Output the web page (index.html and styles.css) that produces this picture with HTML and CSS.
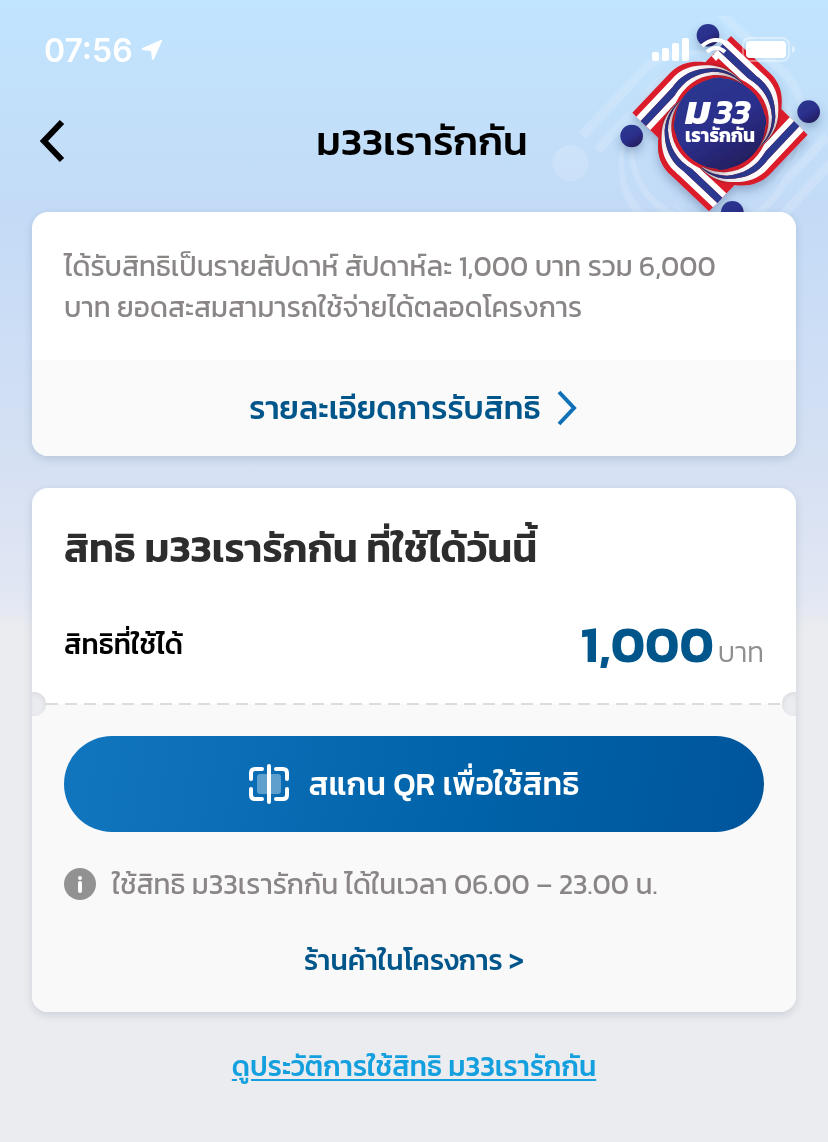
FILE: index.html
```html
<!DOCTYPE html>
<html lang="th">
<head>
  <meta charset="UTF-8" />
  <meta name="viewport" content="width=device-width, initial-scale=1.0"/>
  <title>ม33เรารักกัน</title>
  <link rel="stylesheet" href="styles.css">
</head>
<body>
  <svg class="emblem" viewBox="0 0 864 690" aria-hidden="true">
    <defs>
      <linearGradient id="navy" x1="0" y1="0" x2="0.6" y2="1">
        <stop offset="0" stop-color="#2b3990"/>
        <stop offset="0.6" stop-color="#2c2f8c"/>
        <stop offset="1" stop-color="#241f62"/>
      </linearGradient>
      <linearGradient id="fold" gradientUnits="userSpaceOnUse" x1="-130" y1="-120" x2="75" y2="-130">
        <stop offset="0" stop-color="#1a0d20" stop-opacity="0"/>
        <stop offset="0.5" stop-color="#1a0d20" stop-opacity="0.08"/>
        <stop offset="1" stop-color="#1a0d20" stop-opacity="0.45"/>
      </linearGradient>
      <filter id="soft" x="-20%" y="-20%" width="140%" height="140%">
        <feDropShadow dx="0" dy="16" stdDeviation="14" flood-color="#33507c" flood-opacity="0.35"/>
      </filter>
      <g id="whites">
        <path fill="#fff" d="M-251-21L-146-132C-110-174-66-178-20-174C20-169 50-147 75-113C50-144 20-163-20-166C-67-166-109-155-142-110L-238-8Z"/>
        <path fill="#fff" d="M-222 7L-137-83C-109-131-68-153-20-156C20-156 50-140 75-113C50-134 20-148-20-146C-68-142-109-112-133-62L-209 19Z"/>
      </g>
      <g id="ribbon">
        <path fill="#dc1f2b" d="M-263-33L-150-152C-110-192-65-188-20-181C20-174 50-150 75-113C50-130 20-144-20-137C-70-120-108-75-125-20L-184 44Z"/>
        <use href="#whites"/>
        <path fill="#2b3990" d="M-238-8L-142-110C-109-155-67-166-20-166C20-163 50-144 75-113C50-140 20-156-20-156C-68-153-109-131-137-83L-222 7Z"/>
        <path fill="url(#fold)" d="M-150-152C-110-192-65-188-20-181C20-174 50-150 75-113C50-130 20-144-20-137C-70-120-108-75-125-20Z"/>
      </g>
      <g id="bend">
        <path fill="#dc1f2b" d="M-150-152C-110-192-65-188-20-181C20-174 50-150 75-113C50-130 20-144-20-137C-70-120-108-75-125-20Z"/>
        <path fill="#fff" d="M-152-126L-146-132C-110-174-66-178-20-174C20-169 50-147 75-113C50-144 20-163-20-166C-67-166-109-155-142-110L-148-104Z"/>
        <path fill="#fff" d="M-143-77L-137-83C-109-131-68-153-20-156C20-156 50-140 75-113C50-134 20-148-20-146C-68-142-109-112-133-62L-139-56Z"/>
        <path fill="#2b3990" d="M-148-104L-142-110C-109-155-67-166-20-166C20-163 50-144 75-113C50-140 20-156-20-156C-68-153-109-131-137-83L-143-77Z"/>
        <path fill="url(#fold)" d="M-150-152C-110-192-65-188-20-181C20-174 50-150 75-113C50-130 20-144-20-137C-70-120-108-75-125-20Z"/>
      </g>
      <clipPath id="below"><rect x="0" y="48" width="864" height="642"/></clipPath>
    </defs>

    <g clip-path="url(#below)">
      <g transform="translate(517 430) scale(1.6)" fill="#fff" opacity="0.15">
        <use href="#whites"/>
        <use href="#whites" transform="rotate(90)"/>
        <use href="#whites" transform="rotate(180)"/>
        <use href="#whites" transform="rotate(270)"/>
        <circle cx="-266" cy="37" r="34"/>
      </g>
    </g>

    <g transform="translate(540 371)" filter="url(#soft)">
      <circle cx="-265" cy="37" r="34" fill="url(#navy)"/>
      <circle cx="-36" cy="-265" r="34" fill="url(#navy)"/>
      <circle cx="266" cy="-36" r="34" fill="url(#navy)"/>
      <circle cx="37" cy="266" r="34" fill="url(#navy)"/>
      <circle r="140" fill="url(#navy)"/>
      <use href="#ribbon" transform="rotate(270)"/>
      <use href="#ribbon" transform="rotate(180)"/>
      <use href="#ribbon" transform="rotate(90)"/>
      <use href="#ribbon"/>
      <use href="#bend" transform="rotate(270)"/>
      <circle r="136" fill="url(#navy)"/>
    </g>
    <text class="emblem-letter" x="436" y="371">ม</text>
    <text class="emblem-number" x="522" y="371">33</text>
    <text class="emblem-name" x="540" y="425">เรารักกัน</text>
  </svg>

  <div class="status-bar">
    <div class="status-left">
      <span>07:56</span>
      <svg width="22" height="22" viewBox="0 0 22 22"><path d="M21 2Q21.500.5 20 1L1.500 9Q0 10 1.500 11L10 12L11 20Q12 22 13 20Z" fill="#fff"/></svg>
    </div>
    <div class="status-right">
      <svg width="38" height="24" viewBox="0 0 38 24" fill="#fff">
        <rect x="0" y="14" width="7" height="9" rx="2"/>
        <rect x="10" y="10" width="7" height="13" rx="2"/>
        <rect x="20" y="5" width="7" height="18" rx="2"/>
        <rect x="30" y="0" width="7" height="23" rx="2"/>
      </svg>
      <svg width="32" height="24" viewBox="0 0 32 24" fill="none" stroke="#fff" stroke-width="4">
        <path d="M2 8Q16-4 30 8"/>
        <path d="M7 14Q16 6 25 14"/>
        <path d="M11.500 18L16 23L20.500 18Q16 14 11.500 18Z" fill="#fff" stroke="none"/>
      </svg>
      <svg width="54" height="26" viewBox="0 0 54 26">
        <rect x="1" y="1" width="46" height="23" rx="7" fill="none" stroke="#fff" stroke-opacity="0.4" stroke-width="2"/>
        <rect x="4" y="4" width="40" height="17" rx="4" fill="#fff"/>
        <path d="M50 9Q53 10 53 12.500Q53 15 50 16Z" fill="#fff" fill-opacity="0.5"/>
      </svg>
    </div>
  </div>

  <div class="header">
    <button class="back" type="button" aria-label="ย้อนกลับ">
      <svg width="26" height="44" viewBox="0 0 26 44"><path d="M22 3L4 22L22 41" fill="none" stroke="#000" stroke-width="6"/></svg>
    </button>
    <h1>ม33เรารักกัน</h1>
  </div>

  <main>
    <section class="card">
      <p class="card-text">ได้รับสิทธิเป็นรายสัปดาห์ สัปดาห์ละ 1,000 บาท รวม 6,000<br>บาท ยอดสะสมสามารถใช้จ่ายได้ตลอดโครงการ</p>
      <a class="card-link" href="#">
        <span>รายละเอียดการรับสิทธิ</span>
        <svg width="22" height="36" viewBox="0 0 22 36"><path d="M2 2L17 18L2 34" fill="none" stroke="#1071b8" stroke-width="4"/></svg>
      </a>
    </section>

    <section class="card">
      <div class="benefit">
        <h2>สิทธิ ม33เรารักกัน ที่ใช้ได้วันนี้</h2>
        <div class="balance">
          <span class="balance-label">สิทธิที่ใช้ได้</span>
          <span class="balance-value"><strong>1,000</strong><span class="unit">บาท</span></span>
        </div>
      </div>
      <div class="tear"><span class="notch"></span><span class="dashes"></span><span class="notch right"></span></div>
      <div class="actions">
        <button class="scan" type="button">
          <svg width="40" height="40" viewBox="0 0 40 40" fill="none" stroke="#fff" stroke-width="4" stroke-linecap="round">
            <rect x="8" y="10" width="24" height="20" rx="3" fill="#fff" fill-opacity="0.35" stroke="none"/>
            <path d="M2 15V9Q2 5 6 5H13M27 5H34Q38 5 38 9V15M38 25V31Q38 35 34 35H27M13 35H6Q2 35 2 31V25"/>
            <path d="M20 2V38"/>
          </svg>
          <span>สแกน QR เพื่อใช้สิทธิ</span>
        </button>
        <p class="note">
          <svg width="32" height="32" viewBox="0 0 32 32"><circle cx="16" cy="16" r="16" fill="#929292"/><circle cx="16" cy="10" r="2" fill="#fff"/><path d="M16 15V23" stroke="#fff" stroke-width="4" stroke-linecap="round"/></svg>
          <span>ใช้สิทธิ ม33เรารักกัน ได้ในเวลา 06.00 – 23.00 น.</span>
        </p>
        <a class="shops" href="#">ร้านค้าในโครงการ &gt;</a>
      </div>
    </section>

    <a class="history" href="#">ดูประวัติการใช้สิทธิ ม33เรารักกัน</a>
  </main>
</body>
</html>
```

FILE: styles.css
```css
* {
  box-sizing: border-box;
}

body {
  margin: 0;
  min-height: 100vh;
  position: relative;
  font-family: Kanit, Prompt, "Noto Sans Thai", "Noto Sans", sans-serif;
  background: #ebecf0 linear-gradient(#c1e4ff 0, #c2e0fa 100px, #c3dbf7 200px, #d5e0f3 460px, #e2e7f3 600px, #ebecf0 630px) no-repeat;
}

h1, h2, p {
  margin: 0;
}

a {
  text-decoration: none;
}

button {
  border: 0;
  font-family: inherit;
  cursor: pointer;
}

svg {
  display: block;
  flex: none;
}

.emblem {
  position: absolute;
  top: 0;
  right: 0;
  width: 288px;
  height: 230px;
}

.emblem-letter,
.emblem-number,
.emblem-name {
  fill: #fff;
  font-weight: 700;
}

.emblem-letter {
  font-size: 120px;
  font-style: italic;
}

.emblem-number {
  font-size: 104px;
  font-style: italic;
  font-weight: 600;
}

.emblem-name {
  font-size: 57px;
  text-anchor: middle;
}

.status-bar {
  position: relative;
  display: flex;
  justify-content: space-between;
  align-items: center;
  height: 100px;
  padding: 0 32px 0 44px;
}

.status-left {
  display: flex;
  align-items: center;
  gap: 8px;
  font-family: Inter, sans-serif;
  font-size: 32px;
  font-weight: 600;
  color: #fff;
}

.status-right {
  display: flex;
  align-items: center;
  gap: 10px;
}

.header {
  position: relative;
  display: grid;
  grid-template-columns: 60px 1fr 44px;
  align-items: center;
  height: 80px;
  padding: 2px 32px 0;
}

.back {
  padding: 6px 8px;
  background: none;
}

h1 {
  font-size: 40px;
  font-weight: 500;
  line-height: 48px;
  text-align: center;
}

main {
  position: relative;
  display: flex;
  flex-direction: column;
  gap: 32px;
  padding: 32px;
}

.card {
  background: #fff;
  border-radius: 16px;
  box-shadow: 0 3px 8px rgba(40, 60, 90, 0.16);
}

.card-text {
  padding: 34px 32px 32px;
  font-size: 28px;
  font-weight: 400;
  line-height: 41px;
  color: #8a8686;
}

.card-link {
  display: flex;
  justify-content: center;
  align-items: center;
  gap: 16px;
  height: 96px;
  background: #fafafa;
  border-radius: 0 0 16px 16px;
  font-size: 32px;
  font-weight: 500;
  color: #00568b;
}

.benefit {
  padding: 36px 32px 16px;
}

h2 {
  font-size: 40px;
  font-weight: 600;
  line-height: 48px;
  color: #2d2d2d;
}

.balance {
  display: flex;
  justify-content: space-between;
  align-items: center;
  margin-top: 40px;
  height: 64px;
}

.balance-label {
  font-size: 28px;
  font-weight: 500;
}

.balance-value {
  display: flex;
  align-items: baseline;
  gap: 4px;
  color: #00568b;
}

.balance-value strong {
  font-size: 52px;
  font-weight: 600;
  line-height: 64px;
}

.unit {
  font-size: 28px;
  font-weight: 300;
  color: #8f8f8f;
}

.tear {
  display: flex;
  align-items: center;
  height: 24px;
  background: linear-gradient(#fff 50%, #f9f9f9 50%);
}

.notch {
  width: 14px;
  height: 24px;
  background: #ebecf0;
  border-radius: 0 12px 12px 0;
  box-shadow: inset -1px 2px 4px #dcdde0;
}

.notch.right {
  border-radius: 12px 0 0 12px;
  box-shadow: inset 1px 2px 4px #dcdde0;
}

.dashes {
  flex: 1;
  height: 2px;
  background: repeating-linear-gradient(90deg, #dcdcdc 0 12px, transparent 12px 19px);
}

.actions {
  display: flex;
  flex-direction: column;
  padding: 20px 32px 32px;
  background: #f9f9f9;
  border-radius: 0 0 16px 16px;
}

.scan {
  display: flex;
  justify-content: center;
  align-items: center;
  gap: 20px;
  height: 96px;
  border-radius: 48px;
  background: linear-gradient(100deg, #1276bf, #0062a8 60%, #00559b);
  font-size: 32px;
  font-weight: 500;
  color: #fff;
}

.note {
  display: flex;
  align-items: center;
  gap: 16px;
  margin-top: 32px;
  height: 40px;
  font-size: 28px;
  font-weight: 400;
  color: #8a8686;
}

.shops {
  align-self: center;
  margin-top: 36px;
  font-size: 28px;
  font-weight: 500;
  line-height: 40px;
  color: #00568b;
}

.history {
  align-self: center;
  font-size: 28px;
  font-weight: 500;
  line-height: 44px;
  color: #14a0de;
  text-decoration: underline;
  text-underline-offset: 3px;
}
```
